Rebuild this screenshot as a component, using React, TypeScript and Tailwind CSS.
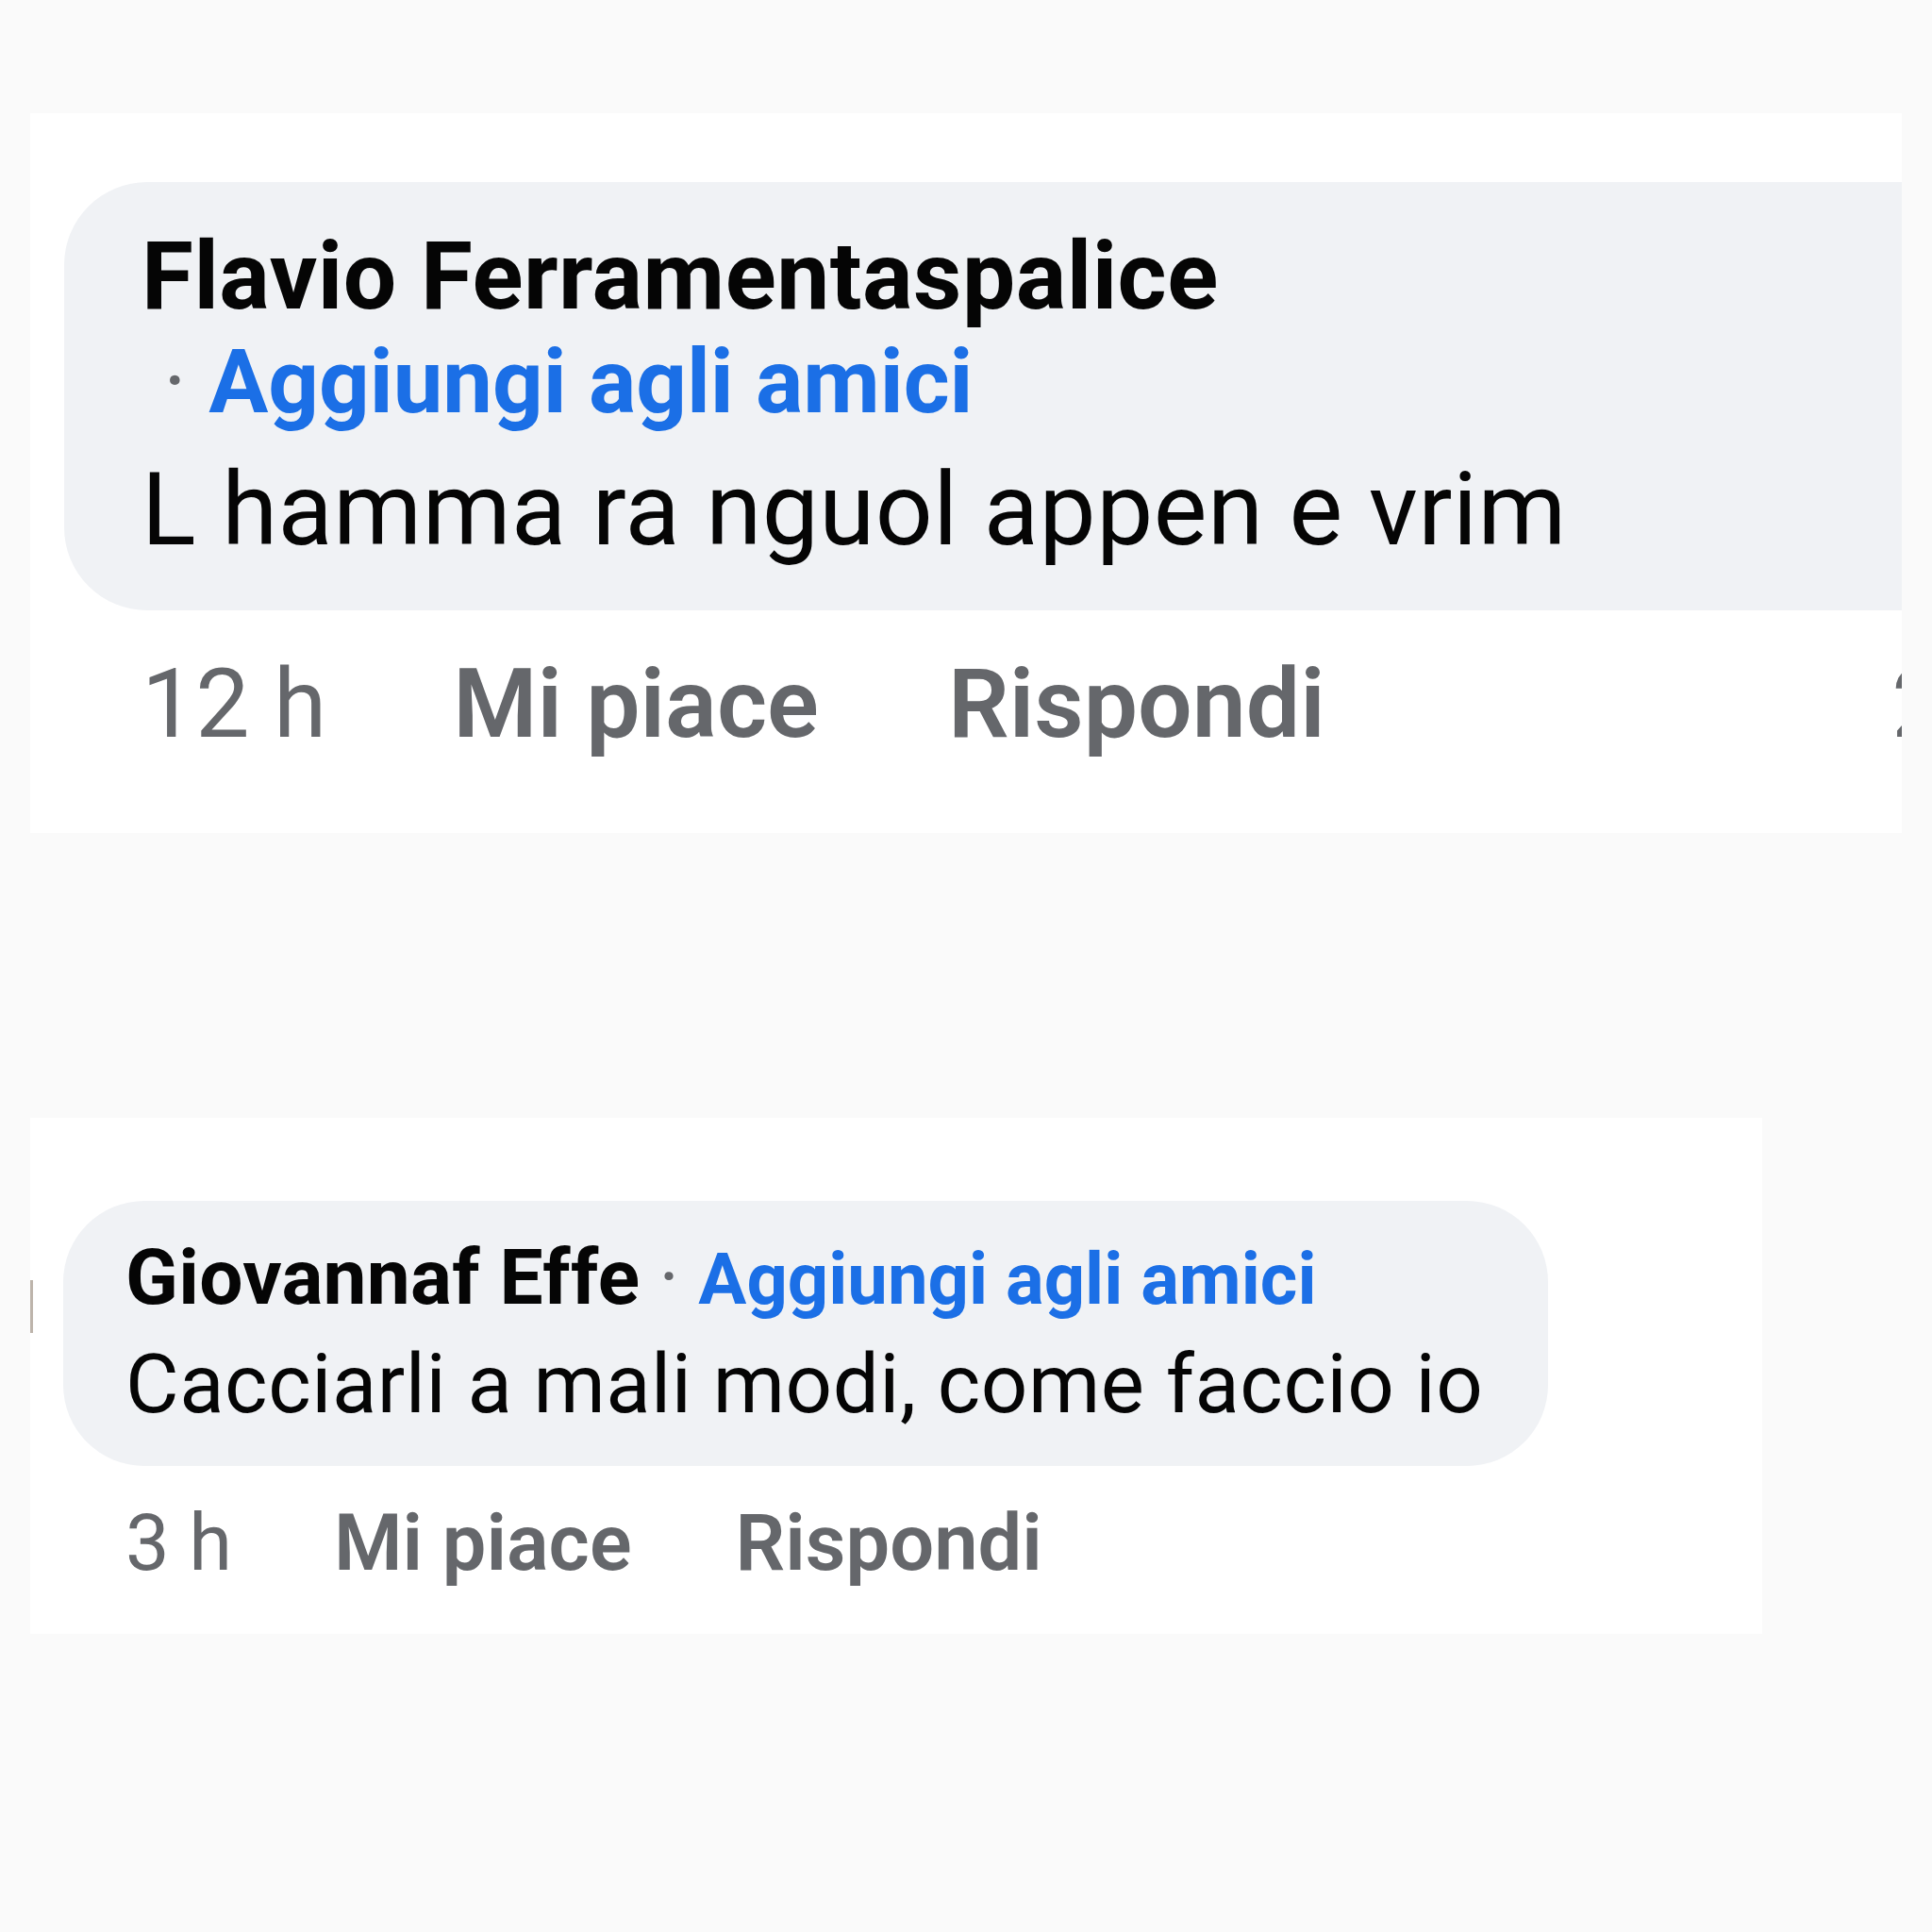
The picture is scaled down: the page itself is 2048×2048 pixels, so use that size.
import React from "react";

const font = { fontFamily: "Roboto, 'Noto Sans', Arial, sans-serif" };

export default function App() {
  return (
    <div
      className="w-[2048px] h-[2048px] bg-[#fafafa] pt-[120px] pl-[32px] text-[#050505]"
      style={font}
    >
      {/* Comment 1 */}
      <div className="relative w-[1984px] bg-white overflow-hidden pt-[73px] pb-[77px]">
        <div className="ml-[36px] rounded-l-[88px] bg-[#f0f2f5] pl-[82px] pt-[45px] pb-[41px]">
          <div className="text-[100px] leading-[110px] font-bold tracking-[0.5px] whitespace-nowrap">
            Flavio Ferramentaspalice
          </div>
          <div className="text-[94px] leading-[114px] whitespace-nowrap">
            <span className="text-[#65676b] font-normal">&nbsp;·&nbsp;</span>
            <span className="text-[#1b6fe6] font-bold">Aggiungi agli amici</span>
          </div>
          <div className="mt-[14px] text-[107px] leading-[130px] tracking-[0.5px] whitespace-nowrap">
            L hamma ra nguol appen e vrim
          </div>
        </div>
        <div className="mt-[39px] pl-[118px] flex items-baseline text-[102px] leading-[120px] text-[#65676b] whitespace-nowrap">
          <span className="font-normal">12 h</span>
          <span className="ml-[134px] font-semibold">Mi piace</span>
          <span className="ml-[137px] font-semibold">Rispondi</span>
        </div>
        <span className="absolute left-[1973px] top-[566px] text-[102px] leading-[120px] text-[#65676b] font-normal">
          2
        </span>
      </div>

      {/* Comment 2 */}
      <div className="relative mt-[302px] w-[1836px] bg-white pt-[88px] pb-[46px]">
        <div className="absolute left-0 top-[172px] w-[3px] h-[56px] bg-[#bdb4ab]" />
        <div className="ml-[35px] w-fit rounded-[86px] bg-[#f0f2f5] pl-[66px] pr-[69px] pt-[33px] pb-[35px]">
          <div className="text-[82px] leading-[96px] whitespace-nowrap">
            <span className="font-bold tracking-[0.3px]">Giovannaf Effe</span>
            <span className="text-[#65676b] font-normal">&nbsp;·&nbsp;</span>
            <span className="text-[#1b6fe6] font-bold text-[76px]">Aggiungi agli amici</span>
          </div>
          <div className="mt-[11px] text-[87px] leading-[104px] tracking-[0.55px] whitespace-nowrap">
            Cacciarli a mali modi, come faccio io
          </div>
        </div>
        <div className="mt-[32px] pl-[101px] flex items-baseline text-[83px] leading-[100px] text-[#65676b] whitespace-nowrap">
          <span className="font-normal">3 h</span>
          <span className="ml-[108px] font-semibold">Mi piace</span>
          <span className="ml-[110px] font-semibold">Rispondi</span>
        </div>
      </div>
    </div>
  );
}
